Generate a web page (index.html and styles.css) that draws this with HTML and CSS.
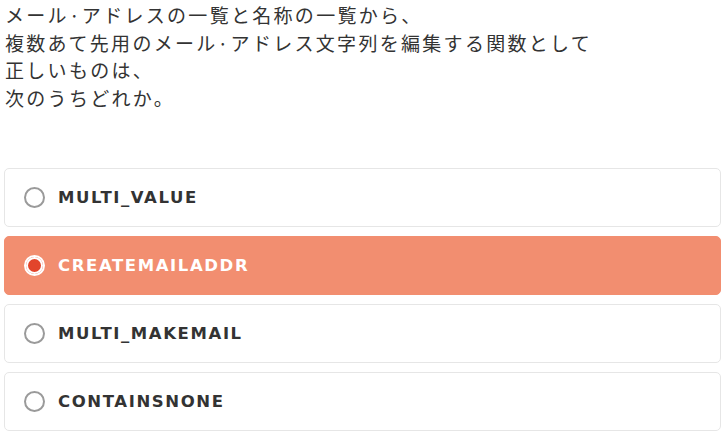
FILE: index.html
```html
<!DOCTYPE html>
<html lang="ja">
<head>
<meta charset="utf-8">
<link rel="stylesheet" href="styles.css">
</head>
<body>
<div class="quiz">
  <p class="question">メール·アドレスの一覧と名称の一覧から、<br>複数あて先用のメール·アドレス文字列を編集する関数として<br>正しいものは、<br>次のうちどれか。</p>
  <ul class="choices">
    <li class="choice"><span class="radio"></span><span class="label">MULTI_VALUE</span></li>
    <li class="choice selected"><span class="radio"></span><span class="label">CREATEMAILADDR</span></li>
    <li class="choice"><span class="radio"></span><span class="label">MULTI_MAKEMAIL</span></li>
    <li class="choice"><span class="radio"></span><span class="label">CONTAINSNONE</span></li>
  </ul>
</div>
</body>
</html>
```
FILE: styles.css
```css
html, body {
  margin: 0;
  background: #fff;
}
body {
  padding: 0 4px;
  font-family: "Noto Sans CJK JP", "Noto Sans", sans-serif;
}
.question {
  margin: 0;
  padding: 1px 0 0 1px;
  font-size: 19px;
  letter-spacing: 2.3px;
  line-height: 27.5px;
  color: #333;
  height: 168px;
  box-sizing: border-box;
}
.choices {
  list-style: none;
  margin: 0;
  padding: 0;
  display: flex;
  flex-direction: column;
  gap: 9px;
}
.choice {
  display: flex;
  align-items: center;
  height: 59px;
  box-sizing: border-box;
  border: 1px solid #e6e6e6;
  border-radius: 5px;
  padding-left: 19px;
  background: #fff;
}
.choice.selected {
  background: #f28e70;
  border-color: #f28e70;
}
.radio {
  width: 21px;
  height: 21px;
  border: 2px solid #9a9a9a;
  border-radius: 50%;
  box-sizing: border-box;
  background: #fff;
  flex: none;
}
.selected .radio {
  border: 2px solid #fff;
  background: #e2452b;
  box-shadow: inset 0 0 0 2px #fff;
}
.label {
  margin-left: 13px;
  font-family: "DejaVu Sans", sans-serif;
  font-weight: bold;
  font-size: 16.5px;
  letter-spacing: 1.6px;
  color: #333;
}
.selected .label {
  color: #fff;
}
```
